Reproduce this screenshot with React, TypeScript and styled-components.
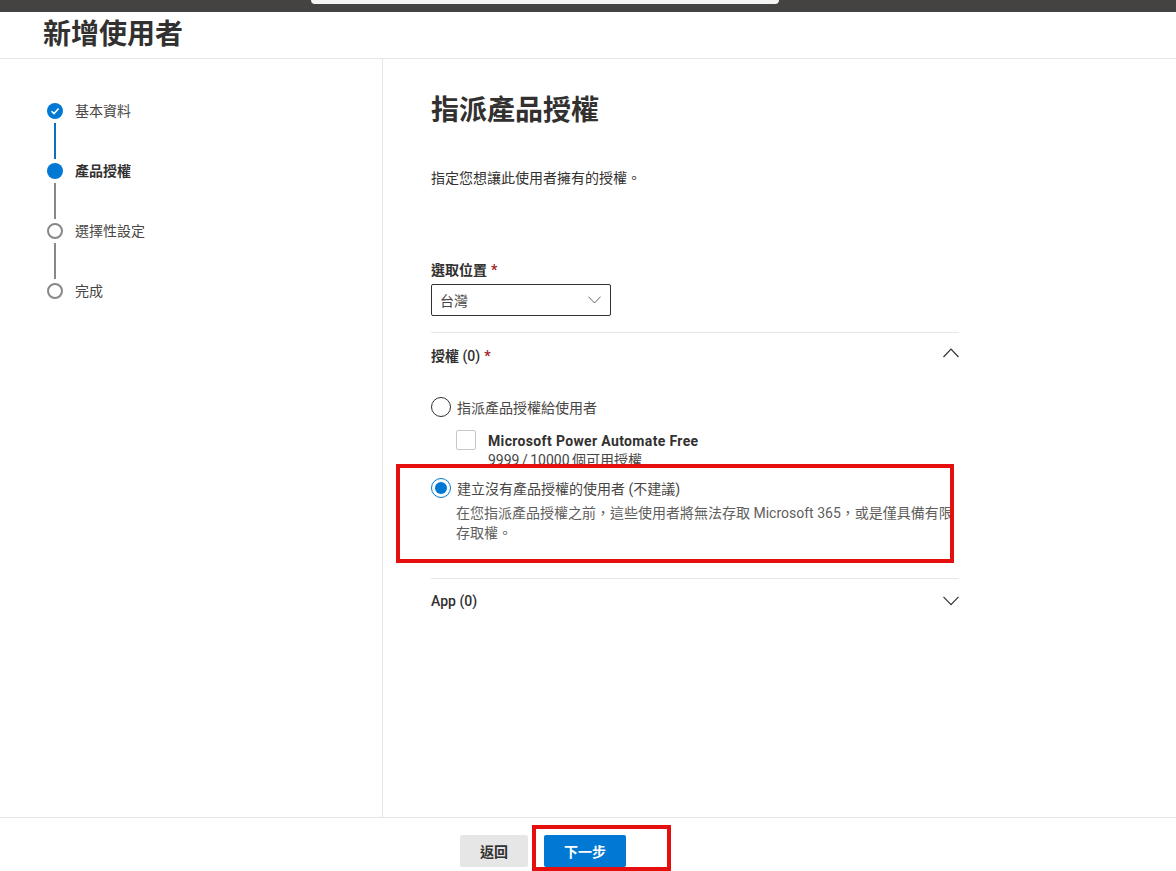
import React from "react";
import { createGlobalStyle, styled } from "styled-components";

const GlobalStyle = createGlobalStyle`
  html, body {
    margin: 0;
    padding: 0;
    background: #fff;
    overflow: hidden;
  }
  body {
    font-family: Roboto, "Noto Sans CJK TC", sans-serif;
    font-size: 14px;
    color: #323130;
  }
`;

const Page = styled.div`
  position: relative;
  display: flex;
  flex-direction: column;
  width: 1176px;
  height: 871px;
  overflow: hidden;
`;

const TopBar = styled.div`
  position: relative;
  flex: none;
  height: 12px;
  background: #444341;
`;

const SearchStub = styled.div`
  position: absolute;
  left: 311px;
  top: 0;
  width: 468px;
  height: 4px;
  background: #f4f4f4;
  border-radius: 0 0 4px 4px;
`;

const TitleRow = styled.header`
  flex: none;
  height: 47px;
  box-sizing: border-box;
  padding-left: 43px;
  border-bottom: 1px solid #e6e6e6;
  display: flex;
  align-items: center;
`;

const Title = styled.h1`
  margin: 0;
  font-size: 28px;
  font-weight: 700;
  line-height: 46px;
  color: #323130;
`;

const Body = styled.div`
  flex: 1;
  display: flex;
  min-height: 0;
`;

const Sidebar = styled.aside`
  flex: none;
  width: 383px;
  box-sizing: border-box;
  border-right: 1px solid #e6e6e6;
  padding: 44px 0 0 47px;
`;

const Step = styled.div`
  display: flex;
  align-items: center;
  gap: 12px;
  height: 16px;
`;

const Dot = styled.span<{ $state: "done" | "current" | "todo" }>`
  flex: none;
  display: flex;
  align-items: center;
  justify-content: center;
  box-sizing: border-box;
  width: 16px;
  height: 16px;
  border-radius: 50%;
  background: ${(p) => (p.$state === "todo" ? "#fff" : "#0078d4")};
  border: ${(p) => (p.$state === "todo" ? "2px solid #8a8886" : "none")};
`;

const StepLabel = styled.span<{ $active?: boolean }>`
  font-size: 14px;
  line-height: 16px;
  font-weight: ${(p) => (p.$active ? 700 : 400)};
  color: ${(p) => (p.$active ? "#323130" : "#484644")};
`;

const Connector = styled.div<{ $done?: boolean }>`
  width: 2px;
  height: 36px;
  margin: 4px 0 4px 7px;
  background: ${(p) => (p.$done ? "#106ebe" : "#8a8886")};
`;

const Main = styled.main`
  flex: 1;
  box-sizing: border-box;
  padding: 0 0 0 48px;
`;

const Column = styled.div`
  width: 528px;
`;

const Heading = styled.h2`
  margin: 0;
  padding-top: 32px;
  font-size: 28px;
  font-weight: 700;
  line-height: 40px;
  color: #323130;
`;

const Lead = styled.p`
  margin: 37px 0 0;
  font-size: 14px;
  line-height: 20px;
  color: #323130;
`;

const FieldLabel = styled.label`
  display: block;
  margin-top: 72px;
  font-size: 14px;
  line-height: 20px;
  font-weight: 700;
  color: #323130;
`;

const Required = styled.span`
  color: #a4262c;
  font-weight: 700;
  margin-left: 4px;
`;

const SelectBox = styled.div`
  box-sizing: border-box;
  display: flex;
  align-items: center;
  justify-content: space-between;
  width: 180px;
  height: 32px;
  margin-top: 4px;
  padding: 0 9px 0 8px;
  border: 1px solid #323130;
  border-radius: 2px;
  font-size: 14px;
  color: #484644;
`;

const Section = styled.section<{ $top: number }>`
  margin-top: ${(p) => p.$top}px;
  border-top: 1px solid #e6e6e6;
`;

const SectionHeader = styled.div<{ $top: number }>`
  display: flex;
  align-items: center;
  justify-content: space-between;
  height: 20px;
  margin-top: ${(p) => p.$top}px;
  font-size: 14px;
  font-weight: 500;
  color: #323130;
`;

const SectionName = styled.span<{ $strong?: boolean }>`
  font-weight: ${(p) => (p.$strong ? 700 : 500)};
`;

const SectionCount = styled.span`
  font-weight: 500;
`;

const ChevronIcon = styled.svg<{ $lift?: boolean }>`
  margin-bottom: ${(p) => (p.$lift ? "4px" : "0")};
`;

const RadioRow = styled.div<{ $top: number }>`
  display: flex;
  align-items: center;
  gap: 6px;
  height: 20px;
  margin-top: ${(p) => p.$top}px;
  font-size: 14px;
  color: #484644;
`;

const Radio = styled.span<{ $on?: boolean }>`
  flex: none;
  box-sizing: border-box;
  display: flex;
  align-items: center;
  justify-content: center;
  width: 20px;
  height: 20px;
  border-radius: 50%;
  border: 1px solid ${(p) => (p.$on ? "#0078d4" : "#323130")};
  &::after {
    content: "";
    display: ${(p) => (p.$on ? "block" : "none")};
    width: 12px;
    height: 12px;
    border-radius: 50%;
    background: #0078d4;
  }
`;

const LicenseRow = styled.div`
  display: flex;
  gap: 12px;
  margin: 14px 0 0 25px;
  height: 32px;
`;

const Checkbox = styled.span`
  flex: none;
  box-sizing: border-box;
  width: 20px;
  height: 20px;
  margin-top: -1px;
  border: 1px solid #c8c6c4;
  border-radius: 2px;
`;

const LicenseName = styled.div`
  font-size: 14px;
  font-weight: 700;
  line-height: 20px;
  letter-spacing: 0.35px;
  color: #323130;
`;

const LicenseCount = styled.div`
  font-size: 14px;
  line-height: 20px;
  margin-top: -1px;
  word-spacing: -1px;
  color: #484644;
`;

const RadioNote = styled.p`
  margin: 5px 0 0 25px;
  width: 497px;
  font-size: 14px;
  line-height: 20px;
  color: #605e5c;
`;

const Footer = styled.footer`
  flex: none;
  height: 54px;
  box-sizing: border-box;
  border-top: 1px solid #e6e6e6;
  display: flex;
  gap: 16px;
  padding: 17px 0 0 460px;
`;

const Button = styled.button<{ $primary?: boolean }>`
  height: 32px;
  width: ${(p) => (p.$primary ? "82px" : "68px")};
  padding: 0;
  border: none;
  border-radius: 2px;
  font-family: inherit;
  font-size: 14px;
  font-weight: 700;
  background: ${(p) => (p.$primary ? "#0078d4" : "#e6e6e6")};
  color: ${(p) => (p.$primary ? "#fff" : "#323130")};
`;

const Highlight = styled.div<{ $x: number; $y: number; $w: number; $h: number }>`
  position: absolute;
  box-sizing: border-box;
  left: ${(p) => p.$x}px;
  top: ${(p) => p.$y}px;
  width: ${(p) => p.$w}px;
  height: ${(p) => p.$h}px;
  border: 4px solid #e60f0f;
  pointer-events: none;
`;

function Chevron({ up, size = 16, color = "#323130" }: { up?: boolean; size?: number; color?: string }) {
  return (
    <ChevronIcon $lift={up} width={size} height={size * 0.6} viewBox="0 0 16 9.6" fill="none">
      <path
        d={up ? "M0.5 9L8 1.2L15.5 9" : "M0.5 0.8L8 8.6L15.5 0.8"}
        stroke={color}
        strokeWidth="1.2"
      />
    </ChevronIcon>
  );
}

const steps: { label: string; state: "done" | "current" | "todo" }[] = [
  { label: "基本資料", state: "done" },
  { label: "產品授權", state: "current" },
  { label: "選擇性設定", state: "todo" },
  { label: "完成", state: "todo" },
];

export default function App() {
  return (
    <Page>
      <GlobalStyle />
      <TopBar>
        <SearchStub />
      </TopBar>
      <TitleRow>
        <Title>新增使用者</Title>
      </TitleRow>
      <Body>
        <Sidebar>
          {steps.map((s, i) => (
            <React.Fragment key={s.label}>
              <Step>
                <Dot $state={s.state}>
                  {s.state === "done" && (
                    <svg width="10" height="10" viewBox="0 0 10 10" fill="none">
                      <path d="M1.5 5.2L4 7.6L8.6 2.6" stroke="#fff" strokeWidth="1.5" />
                    </svg>
                  )}
                </Dot>
                <StepLabel $active={s.state === "current"}>{s.label}</StepLabel>
              </Step>
              {i < steps.length - 1 && <Connector $done={s.state === "done"} />}
            </React.Fragment>
          ))}
        </Sidebar>
        <Main>
          <Column>
            <Heading>指派產品授權</Heading>
            <Lead>指定您想讓此使用者擁有的授權。</Lead>
            <FieldLabel>
              選取位置<Required>*</Required>
            </FieldLabel>
            <SelectBox>
              台灣
              <Chevron size={13} color="#605e5c" />
            </SelectBox>
            <Section $top={16}>
              <SectionHeader $top={12}>
                <SectionName $strong>
                  授權 <SectionCount>(0)</SectionCount>
                  <Required>*</Required>
                </SectionName>
                <Chevron up />
              </SectionHeader>
              <RadioRow $top={32}>
                <Radio />
                指派產品授權給使用者
              </RadioRow>
              <LicenseRow>
                <Checkbox />
                <div>
                  <LicenseName>Microsoft Power Automate Free</LicenseName>
                  <LicenseCount>9999 / 10000 個可用授權</LicenseCount>
                </div>
              </LicenseRow>
              <RadioRow $top={15}>
                <Radio $on />
                建立沒有產品授權的使用者 (不建議)
              </RadioRow>
              <RadioNote>
                在您指派產品授權之前，這些使用者將無法存取 Microsoft 365，或是僅具備有限存取權。
              </RadioNote>
            </Section>
            <Section $top={35}>
              <SectionHeader $top={12}>
                <SectionName>App (0)</SectionName>
                <Chevron />
              </SectionHeader>
            </Section>
          </Column>
        </Main>
      </Body>
      <Footer>
        <Button>返回</Button>
        <Button $primary>下一步</Button>
      </Footer>
      <Highlight $x={396} $y={464} $w={558} $h={99} />
      <Highlight $x={532} $y={825} $w={139} $h={46} />
    </Page>
  );
}
